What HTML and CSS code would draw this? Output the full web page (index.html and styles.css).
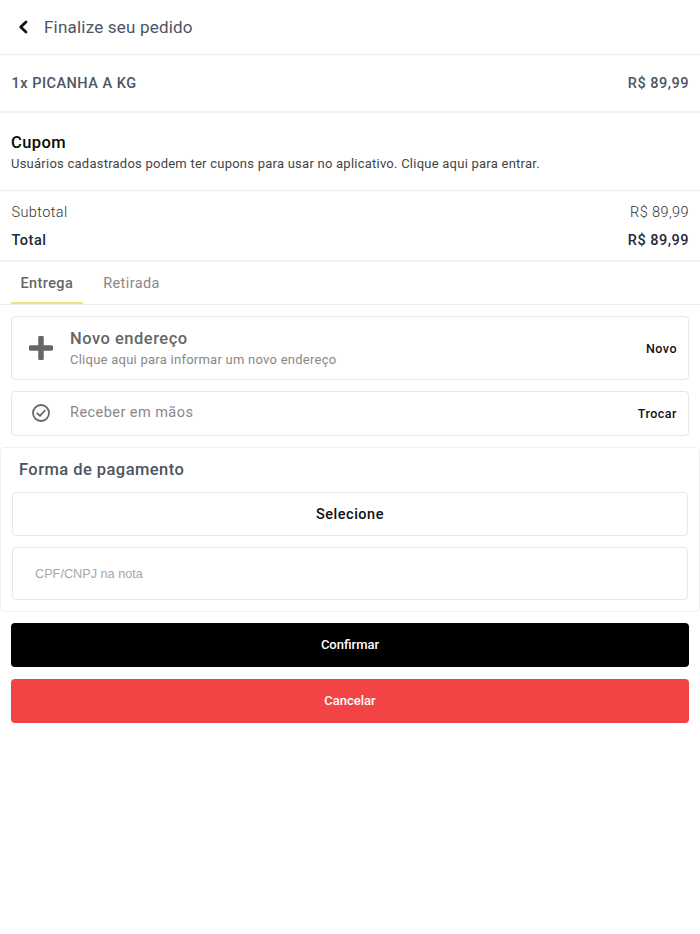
FILE: index.html
```html
<!DOCTYPE html>
<html lang="pt-BR">
<head>
<meta charset="utf-8">
<title>Finalize seu pedido</title>
<link rel="stylesheet" href="styles.css">
</head>
<body>
<header class="header">
  <svg class="back" width="24" height="24" viewBox="0 0 24 24" aria-hidden="true"><path d="M15 7 9.700 12 15 17" fill="none" stroke="#111" stroke-width="2.800" stroke-linecap="round" stroke-linejoin="round"/></svg>
  <h1 class="title">Finalize seu pedido</h1>
</header>
<section class="item">
  <span>1x PICANHA A KG</span><span>R$ 89,99</span>
</section>
<section class="coupon">
  <h2 class="coupon-title">Cupom</h2>
  <p class="coupon-text">Usuários cadastrados podem ter cupons para usar no aplicativo. Clique aqui para entrar.</p>
</section>
<section class="totals">
  <div class="row subtotal"><span>Subtotal</span><span>R$ 89,99</span></div>
  <div class="row total"><span>Total</span><span>R$ 89,99</span></div>
</section>
<nav class="tabs">
  <div class="tab active">Entrega</div>
  <div class="tab">Retirada</div>
</nav>
<div class="cards">
  <div class="card card-address">
    <svg class="plus" width="24" height="24" viewBox="0 0 24 24" aria-hidden="true"><path d="M12 2v20M2 12h20" stroke="#666" stroke-width="5.500" stroke-linecap="round"/></svg>
    <div class="card-body">
      <div class="card-title">Novo endereço</div>
      <div class="card-sub">Clique aqui para informar um novo endereço</div>
    </div>
    <span class="card-action">Novo</span>
  </div>
  <div class="card card-pickup">
    <svg class="check" width="20" height="20" viewBox="0 0 20 20" aria-hidden="true"><circle cx="10" cy="10" r="8" fill="none" stroke="#666" stroke-width="1.800"/><path d="M6.300 10.300 9 12.900l4.800-5.400" fill="none" stroke="#666" stroke-width="1.800" stroke-linecap="round" stroke-linejoin="round"/></svg>
    <div class="card-body pickup-text">Receber em mãos</div>
    <span class="card-action">Trocar</span>
  </div>
</div>
<section class="payment">
  <h2 class="payment-title">Forma de pagamento</h2>
  <div class="select">Selecione</div>
  <input class="doc" type="text" placeholder="CPF/CNPJ na nota">
</section>
<div class="actions">
  <button class="btn btn-confirm" type="button">Confirmar</button>
  <button class="btn btn-cancel" type="button">Cancelar</button>
</div>
</body>
</html>
```
FILE: styles.css
```css
* { box-sizing: border-box; }
html, body { margin: 0; padding: 0; }
body { background: #fff; font-family: Roboto, "Liberation Sans", sans-serif; color: #111; width: 700px; min-height: 934px; overflow: hidden; }
h1, h2, p { margin: 0; font-weight: inherit; }

.header { height: 55px; display: flex; align-items: center; padding-left: 11px; border-bottom: 1px solid #eceef0; }
.title { margin-left: 9px; font-size: 17px; letter-spacing: 0.2px; color: #4b5563; font-weight: 400; }

.item { height: 58px; display: flex; justify-content: space-between; align-items: center; padding: 1px 11px 0 11.500px; border-bottom: 2px solid #f1f1f2; font-size: 14.500px; font-weight: 500; letter-spacing: 0.5px; color: #4b5563; }

.coupon { height: 78px; padding: 20px 11px 0; border-bottom: 1px solid #eceef0; }
.coupon-title { font-size: 16.500px; line-height: 19px; font-weight: 500; letter-spacing: 0.4px; color: #0a0a0a; }
.coupon-text { margin-top: 3px; font-size: 13px; line-height: 18px; letter-spacing: 0.24px; color: #444; }

.totals { height: 71px; padding: 9px 11px 0 11.500px; border-bottom: 2px solid #f1f1f2; }
.row { display: flex; justify-content: space-between; align-items: center; height: 24px; }
.subtotal { font-size: 14.500px; font-weight: 300; letter-spacing: 0.4px; color: #333; }
.total { margin-top: 4px; font-size: 14.500px; font-weight: 500; letter-spacing: 0.5px; color: #1f2937; }

.tabs { height: 43px; display: flex; padding-left: 11px; border-bottom: 1px solid #eceef0; }
.tab { height: 42px; padding: 0 9.500px; line-height: 43px; font-size: 14.500px; letter-spacing: 0.4px; color: #888; margin-right: 11px; }
.tab.active { font-weight: 500; color: #666; border-bottom: 2px solid #eedf85; }

.cards { padding: 11px 11px 0; display: flex; flex-direction: column; gap: 11px; }
.card { display: flex; align-items: center; border: 1px solid #e5e7eb; border-radius: 4px; padding: 0 11px 0 17px; }
.card-address { height: 64px; }
.card-pickup { height: 45px; }
.plus { flex: none; }
.check { flex: none; margin-left: 2px; margin-bottom: 1px; }
.card-body { flex: 1; margin-left: 17px; }
.card-pickup .card-body { margin-left: 19px; }
.card-title { font-size: 16.500px; line-height: 20px; font-weight: 500; letter-spacing: 0.5px; color: #666; }
.card-sub { margin-top: 2px; font-size: 13px; line-height: 17px; letter-spacing: 0.25px; color: #888; }
.pickup-text { padding-bottom: 2px; font-size: 14.500px; letter-spacing: 0.45px; color: #888; }
.card-action { font-size: 12.500px; font-weight: 500; letter-spacing: 0.5px; color: #111; }

.payment { margin-top: 11px; height: 165px; padding: 12px 11px 0; border: 1px solid #f1f1f2; border-radius: 4px; }
.payment-title { margin-left: 7px; font-size: 16.500px; line-height: 20px; font-weight: 500; letter-spacing: 0.45px; color: #4b5563; }
.select { margin-top: 12px; height: 44px; padding-top: 1px; display: flex; align-items: center; justify-content: center; border: 1px solid #e5e7eb; border-radius: 4px; font-size: 14.500px; font-weight: 500; letter-spacing: 0.5px; color: #111; }
.doc { display: block; margin-top: 11px; width: 100%; height: 53px; padding: 0 22px; border: 1px solid #e5e7eb; border-radius: 4px; outline: none; font-family: "Liberation Sans", Arial, sans-serif; font-size: 12.700px; background: #fff; }
.doc::placeholder { color: #a8a8a8; opacity: 1; }

.actions { margin-top: 11px; padding: 0 11px; display: flex; flex-direction: column; gap: 12px; }
.btn { display: block; width: 100%; height: 44px; border: 0; border-radius: 4px; font-family: Roboto, "Liberation Sans", sans-serif; font-size: 13px; font-weight: 500; color: #fff; letter-spacing: 0; padding: 0 0 1px; }
.btn-confirm { background: #000; }
.btn-cancel { background: #f24444; }
```
